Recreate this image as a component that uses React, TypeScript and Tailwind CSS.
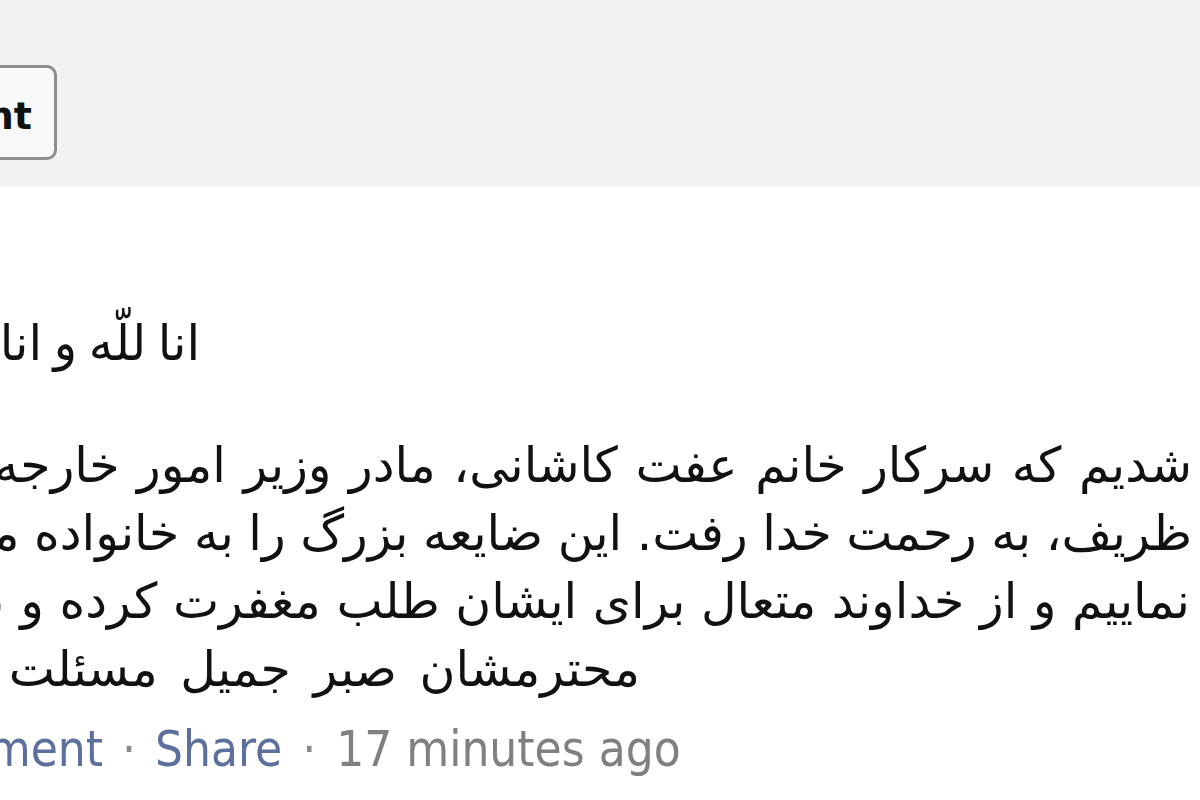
const arabic = { fontFamily: '"DejaVu Sans", sans-serif' };
const condensed = { fontFamily: '"DejaVu Sans Condensed", "DejaVu Sans", sans-serif' };

// Post body, one entry per visual line. The block is wider than the crop, so
// each line starts (RTL) near the right edge and runs off the left side.
const bodyLines = [
  { text: "شدیم که سرکار خانم عفت کاشانی، مادر وزیر امور خارجه جمهوری اسلامی ایران", cls: "w-[1192px] [word-spacing:2px]" },
  { text: "ظریف، به رحمت خدا رفت. این ضایعه بزرگ را به خانواده محترم ایشان تسلیت عرض", cls: "w-[1192px] [word-spacing:-1px]" },
  { text: "نماییم و از خداوند متعال برای ایشان طلب مغفرت کرده و برای بازماندگان", cls: "w-[1190px]" },
  { text: "محترمشان صبر جمیل مسئلت می‌نماییم.", cls: "w-[640px] [word-spacing:7px]" },
];

function CommentButton() {
  return (
    <div className="w-[57px] flex justify-end pt-[65px]">
      <button
        className="shrink-0 h-[95px] px-[22px] pt-[6px] flex items-center rounded-[10px] border-[3px] border-[#8e8e8e] bg-[#f8f8f8] text-[38px] font-bold leading-none text-[#111]"
        style={arabic}
      >
        Comment
      </button>
    </div>
  );
}

export default function App() {
  return (
    <div className="w-[1200px] h-[800px] overflow-hidden bg-white">
      <div className="h-[187px] bg-[#f2f2f2] border-b border-[#f6f6f6]">
        <CommentButton />
      </div>

      <div className="pt-[123px] text-[49px] leading-[68px] text-[#111]" style={arabic}>
        <div dir="rtl" className="w-[200px] whitespace-nowrap [word-spacing:-4px]">
          انا للّه و انا الیه راجعون
        </div>

        <div className="mt-[54px]">
          {bodyLines.map((line, i) => (
            <div key={i} dir="rtl" className={`${line.cls} whitespace-nowrap`}>
              {line.text}
            </div>
          ))}
        </div>
      </div>

      <div className="mt-[16px] flex items-baseline text-[49px] leading-[60px] whitespace-nowrap" style={condensed}>
        <div className="w-[103px] flex justify-end">
          <span className="shrink-0 text-[#5d6f9d]">Comment</span>
        </div>
        <span className="w-[52px] text-center text-[#8a8a8a]">·</span>
        <span className="text-[#5d6f9d]">Share</span>
        <span className="w-[54px] text-center text-[#8a8a8a]">·</span>
        <span className="text-[#808080]">17 minutes ago</span>
      </div>
    </div>
  );
}
